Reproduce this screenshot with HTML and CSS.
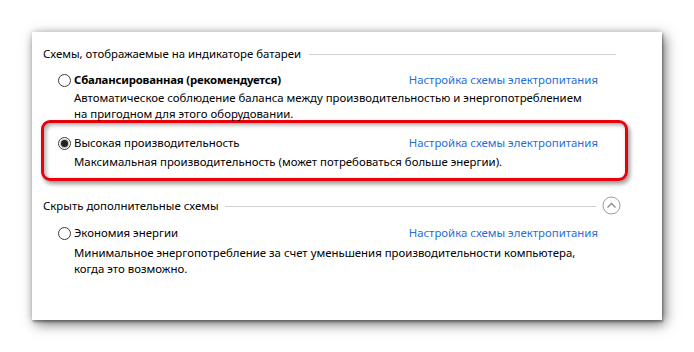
FILE: index.html
```html
<!DOCTYPE html>
<html lang="ru">
<head>
    <meta charset="UTF-8">
    <title>Электропитание</title>
    <link rel="stylesheet" href="styles.css">
</head>
<body>
<div class="page">
<div class="panel">
    <div class="group-head">
        <span>Схемы, отображаемые на индикаторе батареи</span>
        <span class="rule"></span>
    </div>

    <div class="plan">
        <div class="plan-title">
            <label><span class="radio"></span><b>Сбалансированная (рекомендуется)</b></label>
            <a href="#">Настройка схемы электропитания</a>
        </div>
        <p class="plan-desc">Автоматическое соблюдение баланса между производительностью и энергопотреблением<br>на пригодном для этого оборудовании.</p>
    </div>

    <div class="plan marked">
        <div class="plan-title">
            <label><span class="radio checked"></span>Высокая производительность</label>
            <a href="#">Настройка схемы электропитания</a>
        </div>
        <p class="plan-desc">Максимальная производительность (может потребоваться больше энергии).</p>
    </div>

    <div class="group-head second">
        <span>Скрыть дополнительные схемы</span>
        <span class="rule"></span>
        <svg class="toggle" width="19" height="19" viewBox="0 0 19 19">
            <circle cx="9.5" cy="9.5" r="8.5" fill="#fff" stroke="#9a9a9a" stroke-width="1"/>
            <path d="M5.5 11.5 L9.5 7.5 L13.5 11.5" fill="none" stroke="#8a8a8a" stroke-width="1.3"/>
        </svg>
    </div>

    <div class="plan last">
        <div class="plan-title">
            <label><span class="radio"></span>Экономия энергии</label>
            <a href="#">Настройка схемы электропитания</a>
        </div>
        <p class="plan-desc">Минимальное энергопотребление за счет уменьшения производительности компьютера,<br>когда это возможно.</p>
    </div>
</div>
</div>
</body>
</html>
```

FILE: styles.css
```css
* { box-sizing: border-box; }
body {
    margin: 0;
    background: #fff;
    font-family: "Noto Sans", "Open Sans", sans-serif;
    font-size: 11.4px;
    line-height: 16px;
    color: #000;
}
.page {
    height: 352px;
    padding: 32px 0 0 32px;
}
.panel {
    width: 630px;
    height: 288px;
    background: #fff;
    padding: 14px 41px 0 11px;
    box-shadow: 1px 2px 2px rgba(0, 0, 0, 0.3), 3px 4px 12px rgba(0, 0, 0, 0.55), 0 0 6px rgba(0, 0, 0, 0.15);
}
.group-head {
    display: flex;
    align-items: center;
    gap: 8px;
    height: 16px;
    margin-right: 5px;
    white-space: nowrap;
}
.group-head .rule {
    flex: 1;
    height: 1px;
    background: #d0d0d0;
}
.group-head.second {
    margin-top: 17px;
    margin-right: 0;
    gap: 6px;
}
.toggle {
    display: block;
    margin-top: -2px;
}
.plan {
    margin: 10px 23px 0 15px;
}
.plan-title {
    display: flex;
    justify-content: space-between;
    align-items: center;
    height: 16px;
    white-space: nowrap;
}
.plan-title label {
    display: flex;
    align-items: center;
    gap: 3px;
}
.plan-title b {
    letter-spacing: -0.2px;
}
.plan-title a {
    color: #1f6fd6;
    text-decoration: none;
}
.plan-desc {
    margin: 2px 0 0 16px;
    white-space: nowrap;
}
.radio {
    width: 13px;
    height: 13px;
    border: 1px solid #3c3c3c;
    border-radius: 50%;
    background: #fff;
    display: inline-flex;
    align-items: center;
    justify-content: center;
}
.radio.checked::after {
    content: "";
    width: 7px;
    height: 7px;
    border-radius: 50%;
    background: #222;
    box-shadow: 0 0 0 1px #bbb;
}
.plan.marked {
    margin: -2px -7px 0 -2px;
    padding: 12px 27px 8px 14px;
    border: 3px solid #e8000b;
    border-radius: 9px;
    box-shadow: 2px 3px 4px rgba(0, 0, 0, 0.4), inset 2px 2px 4px rgba(0, 0, 0, 0.35);
}
.plan.marked .plan-desc {
    margin-top: 3px;
}
.plan.last {
    margin-top: 11px;
}
.plan.last .plan-desc {
    margin-top: 4px;
}
```
